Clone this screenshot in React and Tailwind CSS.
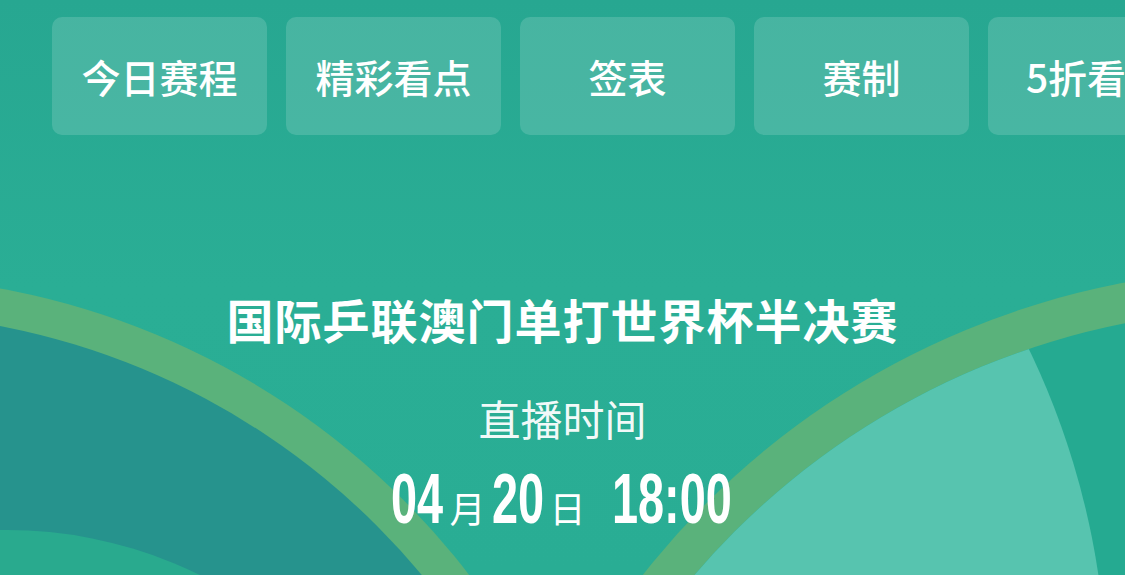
import React from 'react';

const tabs = ['今日赛程', '精彩看点', '签表', '赛制', '5折看球'];

const cjk = { fontFamily: '"Noto Sans CJK SC", "Noto Sans", sans-serif' };

const Digits = ({ text, width }) => (
  <span className="inline-block overflow-visible" style={{ width }}>
    <span className="inline-block origin-left scale-x-[0.66] whitespace-nowrap font-bold text-[71px] leading-none font-['Liberation_Sans',sans-serif]">
      {text}
    </span>
  </span>
);

const Backdrop = () => (
  <svg className="absolute inset-0 w-full h-full" viewBox="0 0 1125 575" preserveAspectRatio="none">
    <defs>
      <clipPath id="rightInner">
        <circle cx="1272" cy="1069" r="760" />
      </clipPath>
      <linearGradient id="sky" x1="0" y1="0" x2="0" y2="1">
        <stop offset="0" stopColor="#27a791" />
        <stop offset="0.5" stopColor="#2aae95" />
        <stop offset="1" stopColor="#29ad94" />
      </linearGradient>
    </defs>
    <rect width="1125" height="575" fill="url(#sky)" />
    <circle cx="-137" cy="1040" r="764" fill="#5ab27b" />
    <circle cx="-137" cy="1040" r="727" fill="#26938d" />
    <circle cx="7" cy="966" r="436" fill="#29aa8e" />
    <circle cx="1272" cy="1069" r="800" fill="#5ab27b" />
    <circle cx="1272" cy="1069" r="760" fill="#25aa91" />
    <circle cx="319" cy="691" r="788" fill="#57c4af" clipPath="url(#rightInner)" />
  </svg>
);

export default function App() {
  return (
    <div className="relative w-[1125px] h-[575px] overflow-hidden bg-[#29ac94] text-white" style={cjk}>
      <Backdrop />
      <div className="relative flex flex-col items-center">
        <div className="self-start flex gap-[19px] pl-[52px] pt-[17px]">
          {tabs.map((t) => (
            <div key={t} className="w-[215px] h-[118px] shrink-0 rounded-[10px] bg-white/15 flex items-center justify-center text-[39px] font-medium leading-none">
              <span className="whitespace-nowrap">{t}</span>
            </div>
          ))}
        </div>

        <h1 className="mt-[160px] text-[47px] font-semibold leading-none tracking-[1px] whitespace-nowrap">
          国际乒联澳门单打世界杯半决赛
        </h1>

        <p className="mt-[55px] text-[42px] leading-none text-white/95">直播时间</p>

        <div className="mt-[24px] flex items-baseline mr-[2px]">
          <Digits text="04" width="58px" />
          <span className="text-[36px] leading-none mr-[6px]">月</span>
          <Digits text="20" width="58px" />
          <span className="text-[36px] leading-none mr-[26px]">日</span>
          <Digits text="18:00" width="120px" />
        </div>
      </div>
    </div>
  );
}
